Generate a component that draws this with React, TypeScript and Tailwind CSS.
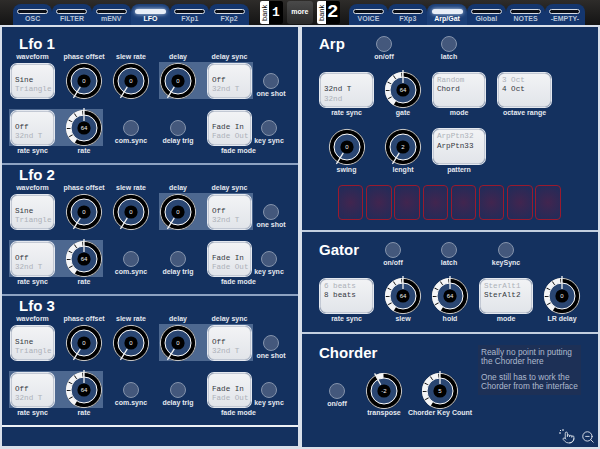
import { Pointer, ZoomOut } from "lucide-react"
import type { ReactNode } from "react"

const sans = "font-['Liberation_Sans',Arial,sans-serif]"

function Label({ children }: { children: ReactNode }) {
    return (
        <div className={`${sans} h-2 leading-2 text-[7px] font-bold text-[#e4e8ef] whitespace-nowrap text-center`}>
            {children}
        </div>
    )
}

function Title({ children }: { children: ReactNode }) {
    return <h2 className={`${sans} h-4 leading-4 text-[15px] font-bold text-white whitespace-nowrap`}>{children}</h2>
}

function Led({ label }: { label: string }) {
    return (
        <div className="flex flex-col items-center">
            <div className="w-4 h-4 flex-none rounded-full bg-[#44587c] border border-[#8493ac] mb-[1px]" />
            <Label>{label}</Label>
        </div>
    )
}

function Select({ above, value, below, className = "" }: { above?: string; value: string; below?: string; className?: string }) {
    return (
        <div className={`h-[34px] flex flex-col justify-center flex-none overflow-hidden rounded-[6px] bg-gradient-to-b from-[#f2f3f5] to-[#e2e5ea] border border-[#c3c9d4] shadow-[0_0_0_1px_#e4e8ef] pl-[3px] font-['Liberation_Mono',monospace] text-[7.6px] ${className}`}>
            <div className="h-[9.5px] leading-[9.5px] text-[#adb1b9] whitespace-nowrap">{above}</div>
            <div className="h-[9.5px] leading-[9.5px] text-[#34383f] whitespace-nowrap">{value}</div>
            <div className="h-[9.5px] leading-[9.5px] text-[#adb1b9] whitespace-nowrap">{below}</div>
        </div>
    )
}

function polar(r: number, deg: number) {
    const a = ((deg - 90) * Math.PI) / 180
    return [20 + r * Math.cos(a), 20 + r * Math.sin(a)]
}

function arc(r: number, from: number, to: number) {
    const [x1, y1] = polar(r, from)
    const [x2, y2] = polar(r, to)
    const large = to - from > 180 ? 1 : 0
    return `M${x1} ${y1}A${r} ${r} 0 ${large} 1 ${x2} ${y2}`
}

// angles are clockwise from the top; fill runs between from and to
function Knob({ value, angle, from, to }: { value: string; angle: number; from?: number; to?: number }) {
    const [x1, y1] = polar(7, angle)
    const [x2, y2] = polar(20, angle)
    return (
        <svg width="40" height="40" viewBox="0 0 40 40" className="flex-none block">
            <circle cx="20" cy="20" r="18" fill="#000" />
            <circle cx="20" cy="20" r="17.6" fill="none" stroke="#fff" strokeWidth="0.8" />
            <circle cx="20" cy="20" r="13" fill="#2a4672" stroke="#fff" strokeWidth="1" />
            {from !== undefined && to !== undefined && (
                <path d={arc(15.5, from, to)} fill="none" stroke="#f4f5f7" strokeWidth="5" strokeDasharray="7 0.8" />
            )}
            <circle cx="20" cy="20" r="6.6" fill="#000" />
            <line x1={x1} y1={y1} x2={x2} y2={y2} stroke="#f2f2f2" strokeWidth="1.3" />
            <text x="20" y="22" textAnchor="middle" fontSize="6" fill="#f2f2f2" fontFamily="Liberation Sans, sans-serif">
                {value}
            </text>
        </svg>
    )
}

const zeroKnob = <Knob value="0" angle={212} />
const rateKnob = <Knob value="64" angle={0} from={212} to={360} />

function LfoSection({ name, className }: { name: string; className: string }) {
    return (
        <section className={`bg-[#14315f] pl-[7px] ${className}`}>
            <div className="pl-[10px] h-[19px] pt-[2px]">
                <Title>{name}</Title>
            </div>
            <div className="flex h-[9px]">
                <div className="w-[47px]"><Label>waveform</Label></div>
                <div className="w-[56px]"><Label>phase offset</Label></div>
                <div className="w-[38px]"><Label>slew rate</Label></div>
                <div className="w-[56px]"><Label>delay</Label></div>
                <div className="w-[47px]"><Label>delay sync</Label></div>
            </div>
            <div className="flex h-[37px] items-center">
                <div className="w-[47px] pl-[2px]"><Select value="Sine" below="Triangle" className="w-[43px]" /></div>
                <div className="w-[56px] flex justify-center">{zeroKnob}</div>
                <div className="w-[38px] flex justify-center">{zeroKnob}</div>
                <div className="w-[94px] h-[37px] ml-[9px] bg-[#4d6890] flex items-center">
                    <div className="w-[38px] flex justify-center">{zeroKnob}</div>
                    <Select value="Off" below="32nd T" className="w-[43px] ml-[11px]" />
                </div>
                <div className="w-[36px] self-start pt-[11px]"><Led label="one shot" /></div>
            </div>
            <div className="flex h-[37px] items-center mt-[10px]">
                <div className="w-[94px] h-[37px] bg-[#4d6890] flex items-center pl-[2px]">
                    <Select value="Off" below="32nd T" className="w-[43px]" />
                    <div className="w-[38px] ml-[11px] flex justify-center">{rateKnob}</div>
                </div>
                <div className="w-[56px] self-start pt-[11px]"><Led label="com.sync" /></div>
                <div className="w-[38px] self-start pt-[11px]"><Led label="delay trig" /></div>
                <div className="w-[54px] pl-[11px]"><Select value="Fade In" below="Fade Out" className="w-[43px]" /></div>
                <div className="w-[36px] self-start pt-[11px]"><Led label="key sync" /></div>
            </div>
            <div className="flex h-[9px] pt-[1px]">
                <div className="w-[47px]"><Label>rate sync</Label></div>
                <div className="w-[56px]"><Label>rate</Label></div>
                <div className="w-[94px]" />
                <div className="w-[47px] ml-[9px]"><Label>fade mode</Label></div>
            </div>
        </section>
    )
}

function Tabs({ items, active, className }: { items: string[]; active: string; className: string }) {
    return (
        <div className={`flex h-[21px] mt-[4px] ${className}`}>
            {items.map((item) => (
                <div key={item} className={`w-[39.3px] rounded-t-[8px] flex flex-col items-center pt-[5px] ${item === active ? "bg-[#1b3f78]" : "bg-[#14366e]"}`}>
                    <div className={`w-[31px] h-[4.5px] rounded-full ${item === active ? "bg-[#e8eef8] shadow-[0_0_4px_#c8d8f0]" : "bg-[#0b0f18] border border-[#d5dbe4]"}`} />
                    <div className={`${sans} text-[7px] leading-[9px] font-bold whitespace-nowrap ${item === active ? "text-white" : "text-[#b7c4d8]"}`}>{item}</div>
                </div>
            ))}
        </div>
    )
}

function Bank({ digit, size }: { digit: string; size: string }) {
    return (
        <div className="flex h-[23px] w-[23px] mt-[1px] rounded-[2px] overflow-hidden flex-none">
            <div className={`${sans} w-[9px] bg-white text-black text-[7.5px] leading-[9px] text-center [writing-mode:vertical-rl] rotate-180`}>bank</div>
            <div className={`flex-1 bg-black text-white font-bold flex items-center justify-center font-['Liberation_Mono',monospace] ${size}`}>{digit}</div>
        </div>
    )
}

export default function App() {
    return (
        <div className="w-[600px] h-[449px] bg-[#d9e0ea] overflow-hidden">
            <header className="h-[25px] flex bg-gradient-to-b from-[#2e2c2a] to-[#141414]">
                <Tabs items={["OSC", "FILTER", "mENV", "LFO", "FXp1", "FXp2"]} active="LFO" className="ml-[13px]" />
                <div className="ml-[11px]"><Bank digit="1" size="text-[13px]" /></div>
                <div className={`${sans} w-[26px] h-[23px] mt-[1px] ml-[4px] rounded-[3px] bg-gradient-to-b from-[#4a4a4a] to-[#2a2a2a] text-white text-[7px] font-bold flex items-center justify-center`}>more</div>
                <div className="ml-[4px]"><Bank digit="2" size="text-[19px]" /></div>
                <Tabs items={["VOICE", "FXp3", "Arp/Gat", "Global", "NOTES", "-EMPTY-"]} active="Arp/Gat" className="ml-[9px]" />
            </header>

            <main className="flex gap-[4px] px-[2px] pt-[2px]">
                <div className="w-[296px] flex flex-col">
                    <LfoSection name="Lfo 1" className="h-[136px] pt-[7px]" />
                    <div className="h-[2px] bg-[#8ea3c2]" />
                    <LfoSection name="Lfo 2" className="h-[129px]" />
                    <div className="h-[2px] bg-[#8ea3c2]" />
                    <LfoSection name="Lfo 3" className="h-[129px]" />
                    <div className="h-[2px] bg-[#eef1f5]" />
                    <section className="h-[19px] bg-[#14315f]" />
                </div>

                <div className="w-[296px] flex flex-col">
                    <section className="h-[203px] bg-[#14315f] pl-[18px] pt-[9px]">
                        <div className="flex">
                            <div className="w-[52px] -ml-[1px]"><Title>Arp</Title></div>
                            <div className="w-[26px]"><Led label="on/off" /></div>
                            <div className="w-[26px] ml-[39px]"><Led label="latch" /></div>
                        </div>
                        <div className="flex mt-[12px]">
                            <div className="w-[53px]">
                                <Select value="32nd T" below="32nd" className="w-[53px]" />
                                <div className="mt-[2px]"><Label>rate sync</Label></div>
                            </div>
                            <div className="w-[60px] flex flex-col items-center">
                                <div className="h-[34px] flex items-center"><Knob value="64" angle={0} from={212} to={360} /></div>
                                <div className="mt-[2px]"><Label>gate</Label></div>
                            </div>
                            <div className="w-[52px]">
                                <Select above="Random" value="Chord" className="w-[52px]" />
                                <div className="mt-[2px]"><Label>mode</Label></div>
                            </div>
                            <div className="w-[53px] ml-[13px]">
                                <Select above="3 Oct" value="4 Oct" className="w-[53px]" />
                                <div className="mt-[2px]"><Label>octave range</Label></div>
                            </div>
                        </div>
                        <div className="flex mt-[12px]">
                            <div className="w-[53px] flex flex-col items-center">
                                <div className="h-[35px] flex items-center">{zeroKnob}</div>
                                <div className="mt-[2px]"><Label>swing</Label></div>
                            </div>
                            <div className="w-[60px] flex flex-col items-center">
                                <div className="h-[35px] flex items-center"><Knob value="2" angle={212} /></div>
                                <div className="mt-[2px]"><Label>lenght</Label></div>
                            </div>
                            <div className="w-[52px]">
                                <Select above="ArpPtn32" value="ArpPtn33" className="w-[52px] h-[35px]" />
                                <div className="mt-[2px]"><Label>pattern</Label></div>
                            </div>
                        </div>
                        <div className="flex gap-[2.8px] mt-[11px] ml-[18px]">
                            {[0, 1, 2, 3, 4, 5, 6, 7].map((i) => (
                                <div key={i} className="w-[25.4px] h-[35px] rounded-[4px] border border-[#9a1a2e] bg-[radial-gradient(circle,#42254f,#1f2c5a)]" />
                            ))}
                        </div>
                    </section>
                    <div className="h-[2px] bg-[#c3cfdf]" />
                    <section className="h-[100px] bg-[#14315f] pl-[18px] pt-[10px]">
                        <div className="flex">
                            <div className="w-[61px] -ml-[1px]"><Title>Gator</Title></div>
                            <div className="w-[26px]"><Led label="on/off" /></div>
                            <div className="w-[26px] ml-[30px]"><Led label="latch" /></div>
                            <div className="w-[26px] ml-[31px]"><Led label="keySync" /></div>
                        </div>
                        <div className="flex mt-[12px]">
                            <div className="w-[53px]">
                                <Select above="6 beats" value="8 beats" className="w-[53px]" />
                                <div className="mt-[2px]"><Label>rate sync</Label></div>
                            </div>
                            <div className="w-[60px] flex flex-col items-center">
                                <div className="h-[34px] flex items-center">{rateKnob}</div>
                                <div className="mt-[2px]"><Label>slew</Label></div>
                            </div>
                            <div className="w-[34px] flex flex-col items-center">
                                <div className="h-[34px] flex items-center">{rateKnob}</div>
                                <div className="mt-[2px]"><Label>hold</Label></div>
                            </div>
                            <div className="w-[52px] ml-[13px]">
                                <Select above="SterAlt1" value="SterAlt2" className="w-[52px]" />
                                <div className="mt-[2px]"><Label>mode</Label></div>
                            </div>
                            <div className="w-[60px] flex flex-col items-center">
                                <div className="h-[34px] flex items-center"><Knob value="0" angle={0} from={212} to={360} /></div>
                                <div className="mt-[2px]"><Label>LR delay</Label></div>
                            </div>
                        </div>
                    </section>
                    <div className="h-[2px] bg-[#c3cfdf]" />
                    <section className="h-[113px] bg-[#14315f] pl-[17px] pt-[11px] flex">
                        <div className="w-[159px]">
                            <Title>Chorder</Title>
                            <div className="flex mt-[12px]">
                                <div className="w-[36px] pt-[10px]"><Led label="on/off" /></div>
                                <div className="w-[58px] flex flex-col items-center">
                                    <div className="h-[36px] flex items-center"><Knob value="-2" angle={-28} from={-28} to={0} /></div>
                                    <Label>transpose</Label>
                                </div>
                                <div className="w-[54px] flex flex-col items-center">
                                    <div className="h-[36px] flex items-center"><Knob value="5" angle={0} from={212} to={360} /></div>
                                    <Label>Chorder Key Count</Label>
                                </div>
                            </div>
                        </div>
                        <div className="w-[120px]">
                            <div className={`${sans} w-[103px] h-[50px] bg-[#1d3056] pl-[3px] pt-[3px] text-[8.3px] leading-[9px] text-[#aebace]`}>
                                <p className="whitespace-nowrap">Really no point in putting<br />the Chorder here</p>
                                <p className="mt-[7px] whitespace-nowrap">One still has to work the<br />Chorder from the interface</p>
                            </div>
                            <div className="flex justify-end items-center gap-[6px] pr-[3px] mt-[35px] text-[#e8ecf2]">
                                <span className="relative">
                                    <Pointer size={13} strokeWidth={1.5} />
                                    <svg width="6" height="6" viewBox="0 0 6 6" className="absolute -left-[3px] -top-[2px]">
                                        <path d="M1 1l1 1M4 0v2M0 4h2" stroke="#e8ecf2" strokeWidth="1" />
                                    </svg>
                                </span>
                                <ZoomOut size={14} strokeWidth={1.5} />
                            </div>
                        </div>
                    </section>
                </div>
            </main>
        </div>
    )
}
